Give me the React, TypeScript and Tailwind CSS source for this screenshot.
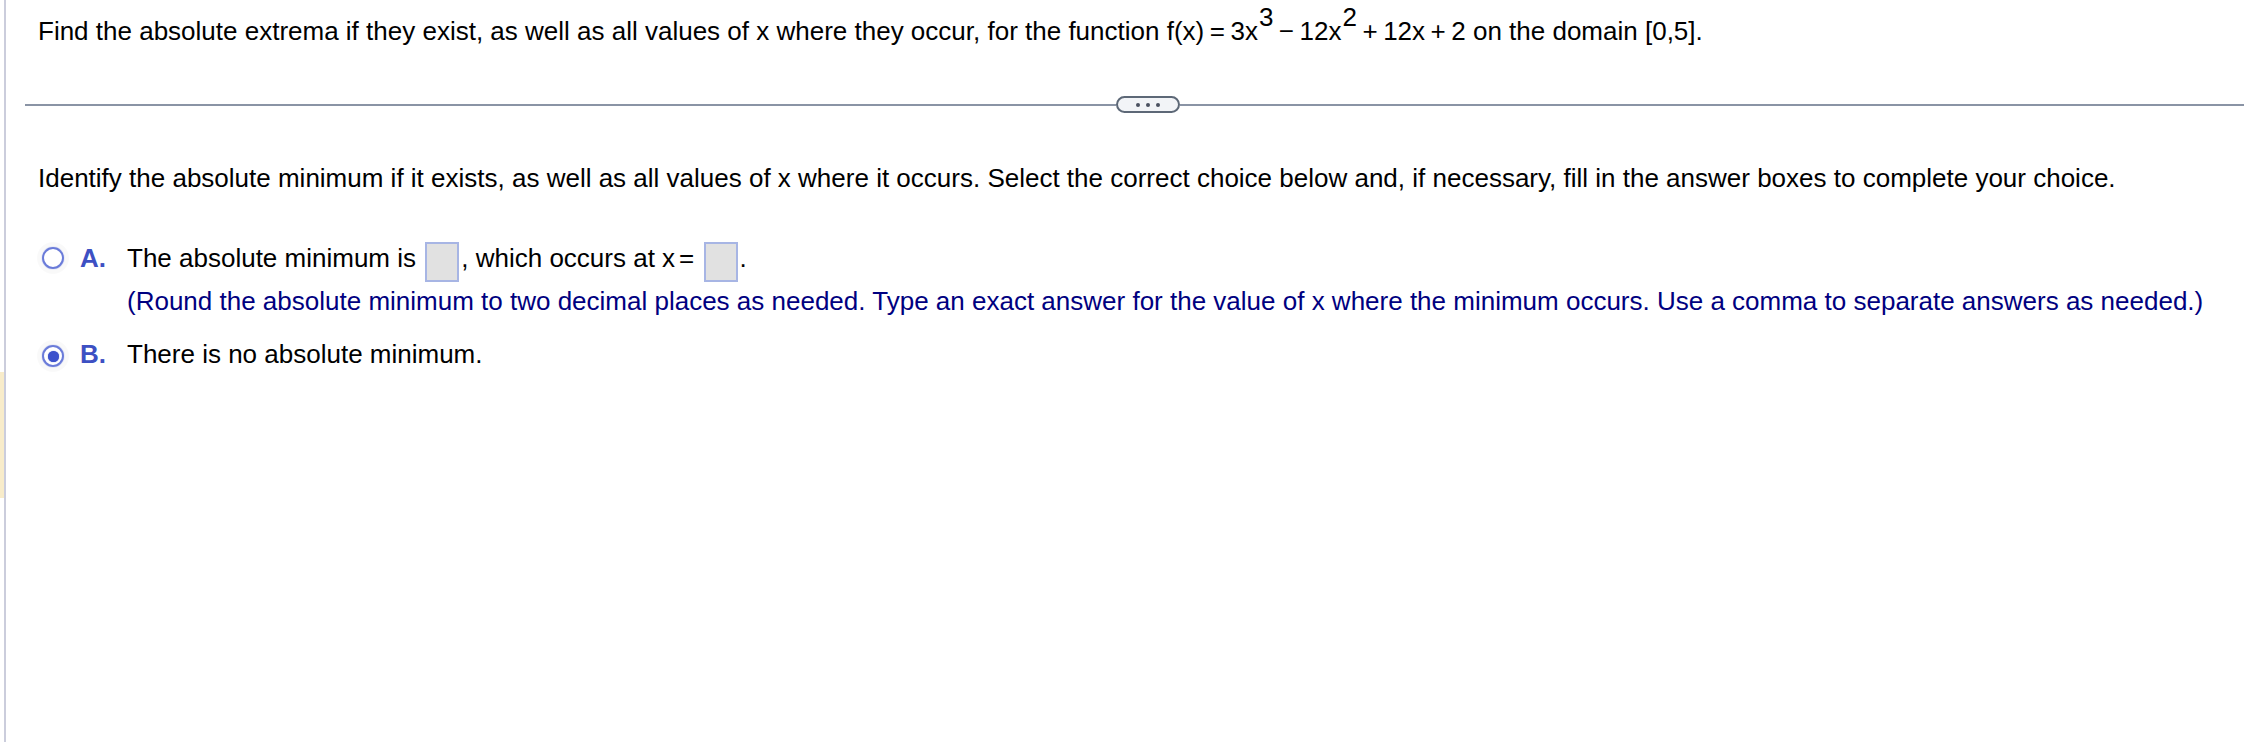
import React from "react";

function AnswerBox() {
  return (
    <span className="mx-[2px] inline-block h-[40px] w-[34px] border-2 border-[#a7b5e4] bg-[#e1e1e1] align-[-15px]" />
  );
}

function Radio({ checked }: { checked?: boolean }) {
  return (
    <span className="flex h-[22px] w-[22px] items-center justify-center rounded-full border-[2.5px] border-[#6a7bd9] shadow-[0_0_1px_#6a7bd9,0_0_0_5px_rgba(0,0,0,0.025)]">
      {checked && <span className="h-[11px] w-[11px] rounded-full bg-[#3d52cc] shadow-[0_0_1px_#3d52cc]" />}
    </span>
  );
}

function Sup({ children }: { children: React.ReactNode }) {
  return <sup className="relative -top-[14px] ml-[1px] text-[26px]">{children}</sup>;
}

function Op({ children }: { children: React.ReactNode }) {
  return <span className="mx-[5.5px]">{children}</span>;
}

export default function App() {
  return (
    <div className="flex min-h-[742px] w-full bg-white font-['Liberation_Sans',Arial,sans-serif] text-[26px] text-black">
      {/* left gutter */}
      <div className="flex w-[4px] flex-col">
        <div className="mt-[372px] h-[126px] bg-[#f8ecca]" />
      </div>
      <div className="w-[2px] bg-[#cbcddc]" />

      <div className="flex-1">
        <p className="mt-[16px] whitespace-nowrap pl-[32px] leading-[30px]">
          Find the absolute extrema if they exist, as well as all values of x where they occur, for the function{" "}
          <span>
            f(x)<Op>=</Op>3x<Sup>3</Sup>
            <Op>−</Op>12x<Sup>2</Sup>
            <Op>+</Op>12x<Op>+</Op>2
          </span>{" "}
          on the domain [0,5].
        </p>

        <div className="mt-[50px] flex items-center pl-[19px]">
          <div className="h-[2px] w-[1091px] bg-[#8a94a5]" />
          <button className="flex h-[17px] w-[64px] items-center justify-center gap-[6px] rounded-full border-2 border-[#5d6877] bg-[#f2f4f7]">
            <span className="h-[4px] w-[4px] rounded-full bg-[#4b5160]" />
            <span className="h-[4px] w-[4px] rounded-full bg-[#4b5160]" />
            <span className="h-[4px] w-[4px] rounded-full bg-[#4b5160]" />
          </button>
          <div className="h-[2px] flex-1 bg-[#8a94a5]" />
        </div>

        <p className="mt-[50px] whitespace-nowrap pl-[32px] leading-[30px]">
          Identify the absolute minimum if it exists, as well as all values of x where it occurs. Select the correct
          choice below and, if necessary, fill in the answer boxes to complete your choice.
        </p>

        <div className="mt-[44px] flex items-start">
          <span className="ml-[36px] mt-[10px]">
            <Radio />
          </span>
          <span className="ml-[16px] w-[47px] font-bold leading-[42px] text-[#3d50c3]">A.</span>
          <div>
            <div className="h-[43px] whitespace-nowrap leading-[42px]">
              The absolute minimum is <AnswerBox />, which occurs at x<span className="ml-[4px]">=</span>{" "}
              <AnswerBox />.
            </div>
            <div className="whitespace-nowrap leading-[42px] text-[#000080]">
              (Round the absolute minimum to two decimal places as needed. Type an exact answer for the value of x
              where the minimum occurs. Use a comma to separate answers as needed.)
            </div>
          </div>
        </div>

        <div className="mt-[11px] flex items-start">
          <span className="ml-[36px] mt-[12px]">
            <Radio checked />
          </span>
          <span className="ml-[16px] w-[47px] font-bold leading-[42px] text-[#3d50c3]">B.</span>
          <div className="whitespace-nowrap leading-[42px]">There is no absolute minimum.</div>
        </div>
      </div>
    </div>
  );
}
